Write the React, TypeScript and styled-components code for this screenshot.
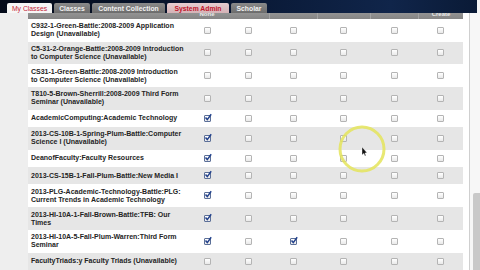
import React from 'react';
import styled, { createGlobalStyle } from 'styled-components';

const GlobalStyle = createGlobalStyle`
  html, body {
    margin: 0;
    padding: 0;
    background: #f4f4f4;
    overflow: hidden;
  }
  #root {
    width: 480px;
    height: 270px;
  }
`;

const COLUMNS = '159px 40px 42px 48px 53px 48px 45px';

const Page = styled.div`
  position: relative;
  width: 480px;
  height: 270px;
  display: flex;
  flex-direction: column;
  overflow: hidden;
  font-family: 'Liberation Sans', Arial, sans-serif;
  background: #f4f4f4;
`;

const TopBar = styled.div`
  height: 13px;
  margin-right: 3px;
  flex-shrink: 0;
  display: flex;
  align-items: flex-end;
  gap: 2px;
  padding-left: 7px;
  background: linear-gradient(90deg, #040b1a 0%, #081631 45%, #10254a 82%, #0a1a36 100%);
`;

const Tab = styled.div<{ $w: number; $kind?: 'active' | 'admin' }>`
  width: ${(p) => p.$w}px;
  height: 10px;
  display: flex;
  align-items: center;
  justify-content: center;
  border-radius: 2px 2px 0 0;
  font-size: 6.8px;
  font-weight: ${(p) => (p.$kind === 'active' ? 'normal' : 'bold')};
  white-space: nowrap;
  color: ${(p) => (p.$kind === 'active' ? '#c42436' : p.$kind === 'admin' ? '#c0142a' : '#f2f2f2')};
  background: ${(p) =>
    p.$kind === 'active'
      ? '#f6f6f6'
      : p.$kind === 'admin'
      ? 'linear-gradient(#e6cdd0, #d4b2b6)'
      : 'linear-gradient(#8a8a8a, #6c6c6c)'};
`;

const Body = styled.div`
  flex: 1;
  display: flex;
  min-height: 0;
`;

const Gutter = styled.div`
  width: 28px;
  flex-shrink: 0;
  background: #eeeeee;
`;

const Table = styled.div`
  width: 435px;
  flex-shrink: 0;
  display: flex;
  flex-direction: column;
  background: #fff;
`;

const HeaderRow = styled.div`
  display: grid;
  grid-template-columns: ${COLUMNS};
  height: 6px;
  background: linear-gradient(#939393, #858585);
`;

const HeaderCell = styled.div<{ $divider?: boolean }>`
  overflow: hidden;
  display: flex;
  justify-content: center;
  border-left: ${(p) => (p.$divider ? '1px solid #a3a3a3' : 'none')};
`;

const HeaderLabel = styled.span`
  margin-top: -2px;
  font-size: 6px;
  font-weight: bold;
  line-height: 7px;
  color: #eaeaea;
`;

const Row = styled.div<{ $alt: boolean; $tall: boolean }>`
  display: grid;
  grid-template-columns: ${COLUMNS};
  height: ${(p) => (p.$tall ? 23.5 : 18)}px;
  align-items: center;
  background: ${(p) => (p.$alt ? '#e6e6e6' : '#ffffff')};
`;

const NameCell = styled.div`
  padding-left: 3px;
  display: flex;
  flex-direction: column;
  font-size: 7px;
  font-weight: bold;
  line-height: 8px;
  color: #242424;
  white-space: nowrap;
`;

const BoxCell = styled.div`
  display: flex;
  justify-content: center;
  align-items: center;
`;

const Box = styled.div<{ $checked: boolean }>`
  position: relative;
  width: 5px;
  height: 5px;
  border: 1px solid ${(p) => (p.$checked ? '#5b6f98' : '#b4b4b4')};
  border-radius: 1px;
  background: linear-gradient(#ffffff, #e9e9e9);
`;

const Check = styled.svg`
  position: absolute;
  left: -1px;
  top: -3px;
  width: 8px;
  height: 8px;
`;

const RightGap = styled.div`
  width: 6px;
  flex-shrink: 0;
  background: #fff;
`;

const Scrollbar = styled.div`
  flex: 1;
  display: flex;
  flex-direction: column;
  justify-content: flex-end;
  border-left: 1px solid #cfcfcf;
  background: #f7f7f7;
`;

const Thumb = styled.div`
  height: 77px;
  margin-left: 3px;
  background: #c9c9c9;
  border-radius: 2px 0 0 0;
`;

const Highlight = styled.svg`
  position: absolute;
  left: 336px;
  top: 124px;
  width: 52px;
  height: 52px;
  pointer-events: none;
`;

const rows: { lines: string[]; checked?: number[] }[] = [
  { lines: ['C932-1-Green-Battle:2008-2009 Application', 'Design (Unavailable)'] },
  { lines: ['C5-31-2-Orange-Battle:2008-2009 Introduction', 'to Computer Science (Unavailable)'] },
  { lines: ['CS31-1-Green-Battle:2008-2009 Introduction', 'to Computer Science (Unavailable)'] },
  { lines: ['T810-5-Brown-Sherrill:2008-2009 Third Form', 'Seminar (Unavailable)'] },
  { lines: ['AcademicComputing:Academic Technology'], checked: [0] },
  { lines: ['2013-CS-10B-1-Spring-Plum-Battle:Computer', 'Science I (Unavailable)'], checked: [0] },
  { lines: ['DeanofFaculty:Faculty Resources'], checked: [0] },
  { lines: ['2013-CS-15B-1-Fall-Plum-Battle:New Media I'], checked: [0] },
  { lines: ['2013-PLG-Academic-Technology-Battle:PLG:', 'Current Trends in Academic Technology'], checked: [0] },
  { lines: ['2013-HI-10A-1-Fall-Brown-Battle:TFB: Our', 'Times'], checked: [0] },
  { lines: ['2013-HI-10A-5-Fall-Plum-Warren:Third Form', 'Seminar'], checked: [0, 2] },
  { lines: ['FacultyTriads:y Faculty Triads (Unavailable)'] },
];

const headers = ['None', '', '', '', '', 'Create'];

const tabs: { label: string; w: number; kind?: 'active' | 'admin' }[] = [
  { label: 'My Classes', w: 45, kind: 'active' },
  { label: 'Classes', w: 36 },
  { label: 'Content Collection', w: 73 },
  { label: 'System Admin', w: 62, kind: 'admin' },
  { label: 'Scholar', w: 36 },
];

const App: React.FC = () => {
  return (
    <Page>
      <GlobalStyle />
      <TopBar>
        {tabs.map((t) => (
          <Tab key={t.label} $w={t.w} $kind={t.kind}>
            {t.label}
          </Tab>
        ))}
      </TopBar>
      <Body>
        <Gutter />
        <Table>
          <HeaderRow>
            <HeaderCell />
            {headers.map((h, i) => (
              <HeaderCell key={i} $divider={i > 1}>
                {h && <HeaderLabel>{h}</HeaderLabel>}
              </HeaderCell>
            ))}
          </HeaderRow>
          {rows.map((row, r) => (
            <Row key={r} $alt={r % 2 === 1} $tall={row.lines.length > 1}>
              <NameCell>
                {row.lines.map((line) => (
                  <span key={line}>{line}</span>
                ))}
              </NameCell>
              {headers.map((_, c) => {
                const on = !!row.checked?.includes(c);
                return (
                  <BoxCell key={c}>
                    <Box $checked={on}>
                      {on && (
                        <Check viewBox="0 0 8 8">
                          <path d="M1.5 4.5 L3.3 6.6 L7.2 1.2" fill="none" stroke="#23428c" strokeWidth="1.5" />
                        </Check>
                      )}
                    </Box>
                  </BoxCell>
                );
              })}
            </Row>
          ))}
        </Table>
        <RightGap />
        <Scrollbar>
          <Thumb />
        </Scrollbar>
      </Body>
      <Highlight viewBox="0 0 52 52">
        <circle cx="26" cy="25" r="22" fill="none" stroke="#e4e45a" strokeWidth="3" opacity="0.85" />
        <path d="M26 23 L26 31 L27.8 29.4 L29 32 L30 31.5 L28.9 29 L31 28.8 Z" fill="#111" stroke="#fff" strokeWidth="0.4" />
      </Highlight>
    </Page>
  );
};

export default App;
